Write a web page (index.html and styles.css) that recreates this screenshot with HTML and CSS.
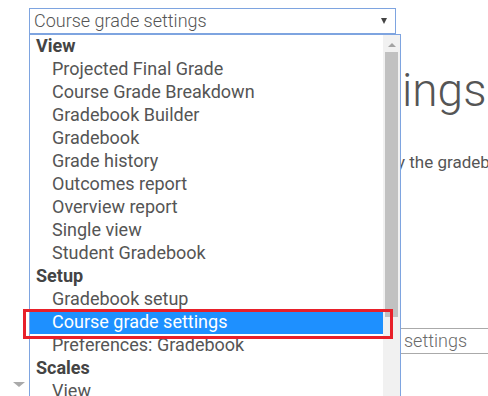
FILE: index.html
```html
<!DOCTYPE html>
<html>
<head>
<meta charset="utf-8">
<link rel="stylesheet" href="styles.css">
</head>
<body>
<div class="page">
  <div class="content">
    <div class="heading">ings</div>
    <div class="desc">y the gradeb</div>
    <div class="field">settings</div>
  </div>
  <div class="collapse"></div>

  <div class="dropdown">
    <div class="select">
      <span class="select-text">Course grade settings</span>
      <span class="caret"></span>
    </div>
    <div class="list">
      <div class="options">
        <div class="group">View</div>
        <div class="opt">Projected Final Grade</div>
        <div class="opt">Course Grade Breakdown</div>
        <div class="opt">Gradebook Builder</div>
        <div class="opt">Gradebook</div>
        <div class="opt">Grade history</div>
        <div class="opt">Outcomes report</div>
        <div class="opt">Overview report</div>
        <div class="opt">Single view</div>
        <div class="opt">Student Gradebook</div>
        <div class="group">Setup</div>
        <div class="opt">Gradebook setup</div>
        <div class="opt selected">Course grade settings</div>
        <div class="opt">Preferences: Gradebook</div>
        <div class="group">Scales</div>
        <div class="opt">View</div>
      </div>
      <div class="scrollbar">
        <div class="up"><span class="up-arrow"></span></div>
        <div class="thumb"></div>
      </div>
    </div>
  </div>
  <div class="highlight-box"></div>
</div>
</body>
</html>
```
FILE: styles.css
```css
html, body {
  margin: 0;
  padding: 0;
  background: #ffffff;
}
body {
  font-family: Roboto, "Liberation Sans", sans-serif;
  color: #555555;
}
.page {
  position: relative;
  width: 488px;
  height: 396px;
  overflow: hidden;
}
.content {
  display: flex;
  flex-direction: column;
  padding-left: 401px;
  white-space: nowrap;
}
.heading {
  margin-top: 63px;
  font-size: 46px;
  font-weight: 300;
  line-height: 54px;
  color: #555555;
  padding-left: 1px;
}
.desc {
  margin-top: 33px;
  font-size: 17px;
  line-height: 24px;
  color: #555555;
  margin-left: -4px;
}
.field {
  margin-top: 154px;
  height: 24px;
  border-top: 1px solid #aaaaaa;
  border-bottom: 1px solid #aaaaaa;
  font-size: 18px;
  font-weight: 300;
  line-height: 24px;
  padding-left: 3px;
  color: #6a6a6a;
}
.collapse {
  position: absolute;
  left: 13px;
  top: 382px;
  width: 0;
  height: 0;
  border-left: 6px solid transparent;
  border-right: 6px solid transparent;
  border-top: 5px solid #aaaaaa;
}
.dropdown {
  position: absolute;
  left: 29px;
  top: 8px;
  width: 367px;
}
.select {
  box-sizing: border-box;
  height: 26px;
  border: 1px solid #7ea4e0;
  display: flex;
  align-items: center;
  justify-content: space-between;
  padding: 0 8px 0 4px;
  background: #ffffff;
}
.select-text {
  font-size: 18px;
  font-weight: 300;
  line-height: 24px;
  color: #555555;
}
.caret {
  width: 0;
  height: 0;
  border-left: 3.5px solid transparent;
  border-right: 3.5px solid transparent;
  border-top: 6px solid #444444;
}
.list {
  position: absolute;
  left: 0;
  top: 26px;
  width: 372px;
  height: 380px;
  box-sizing: border-box;
  border: 1px solid #7ea4e0;
  background: #ffffff;
  display: flex;
}
.options {
  flex: 1;
  display: flex;
  flex-direction: column;
}
.group, .opt {
  height: 23px;
  line-height: 22px;
  font-size: 18px;
  white-space: nowrap;
}
.group {
  font-weight: 700;
  color: #444444;
  padding-left: 6px;
}
.opt {
  padding-left: 22px;
  color: #555555;
}
.opt.selected {
  background: #1e90ff;
  color: #ffffff;
}
.scrollbar {
  width: 17px;
  background: #f1f1f1;
  display: flex;
  flex-direction: column;
  align-items: center;
}
.up {
  height: 17px;
  width: 17px;
  display: flex;
  align-items: center;
  justify-content: center;
}
.up-arrow {
  width: 0;
  height: 0;
  border-left: 4px solid transparent;
  border-right: 4px solid transparent;
  border-bottom: 4px solid #a3a3a3;
  margin-top: 2px;
}
.thumb {
  width: 13px;
  height: 265px;
  background: #c1c1c1;
}
.highlight-box {
  position: absolute;
  left: 23px;
  top: 309px;
  width: 370px;
  height: 30px;
  box-sizing: border-box;
  border: 3px solid #e8202a;
}
```
